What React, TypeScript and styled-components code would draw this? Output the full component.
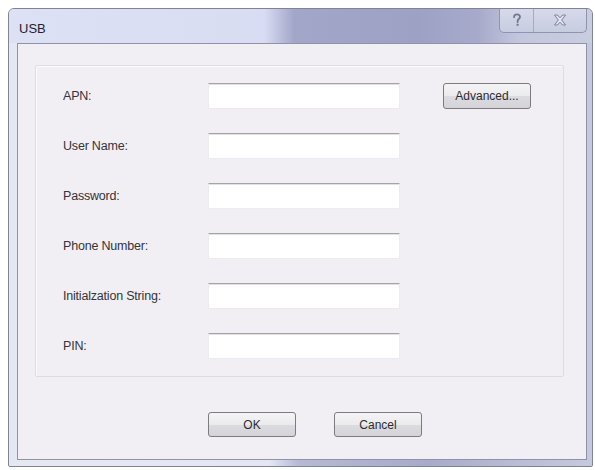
import type { FC } from "react";
import { Fragment } from "react";
import styled, { createGlobalStyle } from "styled-components";

const GlobalStyle = createGlobalStyle`
  html, body {
    margin: 0;
    padding: 0;
    background: #ffffff;
  }
  body {
    font-family: "Liberation Sans", Arial, sans-serif;
  }
`;

const Window = styled.div`
  box-sizing: border-box;
  margin: 8px 0 0 8px;
  width: 585px;
  height: 459px;
  border: 1px solid #7f8393;
  border-radius: 6px 6px 2px 2px;
  background: linear-gradient(
    to right,
    #e6e8f1 0,
    #e4e7f3 260px,
    #b4b9d4 290px,
    #a6abcb 420px,
    #b3b7d1 480px,
    #c6cade 100%
  );
  display: flex;
  flex-direction: column;
  overflow: hidden;
`;

const TitleBar = styled.div`
  height: 34px;
  display: flex;
  align-items: flex-start;
  justify-content: space-between;
  background: linear-gradient(
    to right,
    #dde1f4 0,
    #d9ddf3 255px,
    #a2a7ca 285px,
    #9da2c5 410px,
    #a7aaca 470px,
    #c3c7dd 510px,
    #c9cde0 100%
  );
`;

const Title = styled.span`
  margin: 12px 0 0 10px;
  font-size: 13px;
  color: #1f2230;
`;

const CaptionButtons = styled.div`
  display: flex;
  margin-right: 5px;
  margin-top: -1px;
  border: 1px solid #8f95ae;
  border-top: none;
  border-radius: 0 0 5px 5px;
  overflow: hidden;
  background: linear-gradient(to bottom, #d6daea, #c8cce0);
`;

const CaptionButton = styled.div<{ $wide?: boolean }>`
  width: ${(p) => (p.$wide ? 52 : 33)}px;
  height: 24px;
  display: flex;
  align-items: center;
  justify-content: center;
  & + & {
    border-left: 1px solid #a7abc2;
  }
`;

const Client = styled.div`
  flex: 1;
  margin: 0 5px 6px 8px;
  border: 1px solid #8e93a7;
  background: #f1eff4;
  display: flex;
  flex-direction: column;
`;

const GroupBox = styled.div`
  margin: 21px 22px 0 17px;
  height: 312px;
  box-sizing: border-box;
  border: 1px solid #dddce3;
  box-shadow: inset 1px 1px 0 #fbfafd;
  border-radius: 2px;
  padding: 17px 0 0 27px;
  display: grid;
  grid-template-columns: 145px 192px auto;
  grid-auto-rows: 26px;
  row-gap: 24px;
  align-items: center;
`;

const Label = styled.span`
  font-size: 12.5px;
  color: #34343a;
  letter-spacing: -0.2px;
`;

const Field = styled.input`
  box-sizing: border-box;
  width: 192px;
  height: 26px;
  border: 1px solid #ececf0;
  border-top: 1px solid #a3a3a8;
  box-shadow: inset 0 1px 0 #e2e2e6;
  background: #ffffff;
  outline: none;
`;

const Button = styled.button`
  box-sizing: border-box;
  width: 88px;
  height: 25px;
  border: 1px solid #7b7b80;
  border-radius: 3px;
  background: linear-gradient(to bottom, #f4f4f6 0%, #ebebee 50%, #dcdce0 51%, #d4d4d8 100%);
  font-family: "Liberation Sans", Arial, sans-serif;
  font-size: 12px;
  color: #2c2c30;
  padding: 0;
`;

const AdvancedButton = styled(Button)`
  margin-left: 43px;
  height: 26px;
`;

const Footer = styled.div`
  display: flex;
  gap: 38px;
  margin: 35px 0 0 190px;
`;

const QuestionIcon = () => (
  <svg width="12" height="14" viewBox="0 0 12 14">
    <path
      d="M3 4.2 C3 2.3 4.4 1.3 6 1.3 C7.8 1.3 9 2.4 9 3.9 C9 5.6 6.6 6 6.6 8.3 V9"
      fill="none"
      stroke="#737890"
      strokeWidth="1.8"
      strokeLinecap="round"
    />
    <rect x="5.6" y="10.8" width="2" height="2" fill="#737890" />
  </svg>
);

const CloseIcon = () => (
  <svg width="14" height="12" viewBox="0 0 14 12">
    <path
      d="M1.5 1 H4.5 L7 3.8 L9.5 1 H12.5 L8.7 6 L12.5 11 H9.5 L7 8.2 L4.5 11 H1.5 L5.3 6 Z"
      fill="#e2e5f0"
      stroke="#7b8096"
      strokeWidth="1"
      strokeLinejoin="round"
    />
  </svg>
);

type FieldRow = { label: string; advanced?: boolean };

const rows: FieldRow[] = [
  { label: "APN:", advanced: true },
  { label: "User Name:" },
  { label: "Password:" },
  { label: "Phone Number:" },
  { label: "Initialzation String:" },
  { label: "PIN:" },
];

const App: FC = () => (
  <>
    <GlobalStyle />
    <Window>
      <TitleBar>
        <Title>USB</Title>
        <CaptionButtons>
          <CaptionButton>
            <QuestionIcon />
          </CaptionButton>
          <CaptionButton $wide>
            <CloseIcon />
          </CaptionButton>
        </CaptionButtons>
      </TitleBar>
      <Client>
        <GroupBox>
          {rows.map((row) => (
            <Fragment key={row.label}>
              <Label>{row.label}</Label>
              <Field type={row.label === "Password:" ? "password" : "text"} />
              {row.advanced ? <AdvancedButton>Advanced...</AdvancedButton> : <span />}
            </Fragment>
          ))}
        </GroupBox>
        <Footer>
          <Button>OK</Button>
          <Button>Cancel</Button>
        </Footer>
      </Client>
    </Window>
  </>
);

export default App;
